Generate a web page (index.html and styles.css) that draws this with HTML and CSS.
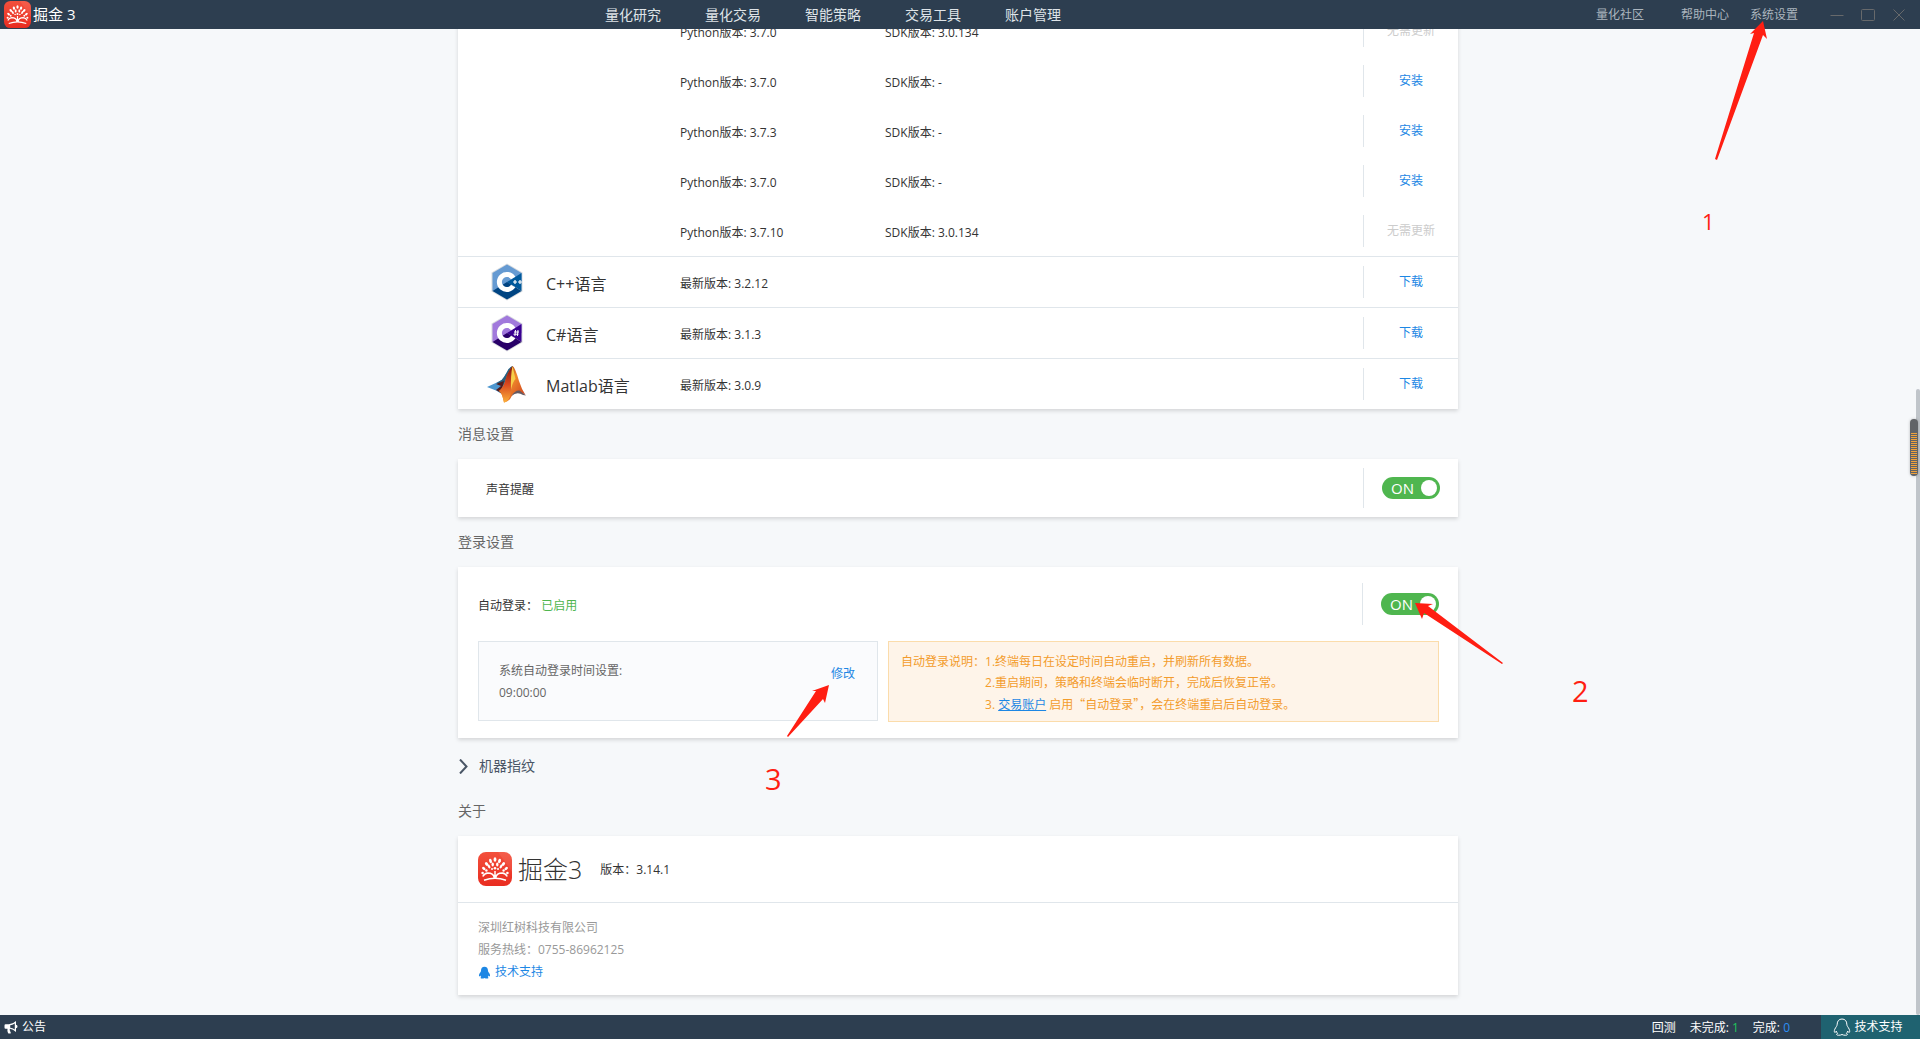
FILE: index.html
```html
<!DOCTYPE html>
<html lang="zh-CN">
<head>
<meta charset="utf-8">
<title>掘金3 - 系统设置</title>
<link rel="stylesheet" href="styles.css">
</head>
<body>
<svg class="defs" aria-hidden="true">
  <defs>
    <linearGradient id="red" x1="0" y1="0" x2="0" y2="1"><stop offset="0" stop-color="#f3503c"/><stop offset="1" stop-color="#e92c20"/></linearGradient>
    <linearGradient id="flame" x1="0" y1="0" x2="1" y2="1"><stop offset="0" stop-color="#8d1d12"/><stop offset=".45" stop-color="#f08a2c"/><stop offset="1" stop-color="#c8321a"/></linearGradient>
    <linearGradient id="flame2" x1="0" y1="0" x2="0" y2="1"><stop offset="0" stop-color="#7c1510"/><stop offset=".5" stop-color="#d9481f"/><stop offset="1" stop-color="#fbb03a"/></linearGradient>
    <symbol id="tree" viewBox="0 0 34 34">
      <rect width="34" height="34" rx="8" fill="url(#red)"/>
      <path d="M20 0h6a8 8 0 0 1 8 8v12z" fill="#fff" opacity=".08"/>
      <g fill="#fff">
        <ellipse cx="17" cy="7.500" rx="1.400" ry="2.300"/><ellipse cx="12.500" cy="9" rx="1.400" ry="2.200" transform="rotate(-15 12.500 9)"/><ellipse cx="21.500" cy="9" rx="1.400" ry="2.200" transform="rotate(15 21.500 9)"/>
        <ellipse cx="8.600" cy="12" rx="1.400" ry="2.100" transform="rotate(-40 8.600 12)"/><ellipse cx="25.400" cy="12" rx="1.400" ry="2.100" transform="rotate(40 25.400 12)"/>
        <ellipse cx="14.700" cy="12.500" rx="1.200" ry="2"/><ellipse cx="19.300" cy="12.500" rx="1.200" ry="2"/>
        <ellipse cx="11" cy="14.500" rx="1.200" ry="2" transform="rotate(-30 11 14.500)"/><ellipse cx="23" cy="14.500" rx="1.200" ry="2" transform="rotate(30 23 14.500)"/>
        <ellipse cx="5.800" cy="16.500" rx="1.300" ry="2" transform="rotate(-50 5.800 16.500)"/><ellipse cx="28.200" cy="16.500" rx="1.300" ry="2" transform="rotate(50 28.200 16.500)"/>
        <circle cx="17" cy="16.300" r="1.300"/><circle cx="14" cy="17" r="1"/><circle cx="20" cy="17" r="1"/><circle cx="8.400" cy="18.500" r="1.200"/><circle cx="25.600" cy="18.500" r="1.200"/><circle cx="4.600" cy="21" r="1.300"/><circle cx="29.400" cy="21" r="1.300"/>
      </g>
      <path d="M17 19v6M16.300 25.500q-1-4.500-6.500-4.500-3.500.3-5 3.500M17.700 25.500q1-4.500 6.500-4.500 3.500.3 5 3.500M6 28.300q11-4 22 0" fill="none" stroke="#fff" stroke-width="1.500"/>
    </symbol>
    <symbol id="hex-shape" viewBox="0 0 32 38">
      <path d="M16 0.500 31.500 9.500v19L16 37.500.5 28.500v-19z" fill="#d9dcdf"/>
    </symbol>
    <symbol id="bell-qq" viewBox="0 0 18 18">
      <path d="M9 1C5.800 1 4.200 3.300 4.200 6.200 4.200 8 2.800 9 1.800 11.200c-.8 1.800-.5 3.300.1 3.300.6 0 1.100-.9 1.500-1.300.2.900.6 1.600 1.200 2.200-.7.3-1.100.7-1 1.100.2 1 3.600 1 5.400 0 1.800 1 5.200 1 5.400 0 .1-.4-.3-.8-1-1.100.6-.6 1-1.300 1.200-2.200.4.400.9 1.300 1.500 1.300.6 0 .9-1.500.1-3.300C15.200 9 13.800 8 13.800 6.200 13.800 3.300 12.200 1 9 1z"/>
    </symbol>
  </defs>
</svg>

<header class="topbar">
  <div class="brand"><svg class="brand-icon"><use href="#tree"/></svg><span>掘金 3</span></div>
  <nav class="main-nav">
    <a href="#">量化研究</a><a href="#">量化交易</a><a href="#">智能策略</a><a href="#">交易工具</a><a href="#">账户管理</a>
  </nav>
  <nav class="side-nav">
    <a class="community" href="#">量化社区</a><a href="#">帮助中心</a><a href="#">系统设置</a>
  </nav>
  <div class="window-buttons">
    <button type="button" aria-label="最小化"><svg viewBox="0 0 14 14"><path d="M.5 7.500h13"/></svg></button>
    <button type="button" aria-label="最大化"><svg viewBox="0 0 14 14"><rect x=".5" y="1.500" width="13" height="11" rx="1"/></svg></button>
    <button type="button" aria-label="关闭"><svg viewBox="0 0 14 14"><path d="m1.500 1.500 11 11m0-11-11 11"/></svg></button>
  </div>
</header>

<main class="viewport">
  <div class="page">
    <table class="card sdk">
      <colgroup><col class="c-icon"><col class="c-name"><col class="c-version"><col><col class="c-action"></colgroup>
      <tbody>
        <tr><td></td><td></td><td>Python版本: 3.7.0</td><td>SDK版本: 3.0.134</td><td><div class="action"><button type="button" disabled>无需更新</button></div></td></tr>
        <tr><td></td><td></td><td>Python版本: 3.7.0</td><td>SDK版本: -</td><td><div class="action"><button type="button">安装</button></div></td></tr>
        <tr><td></td><td></td><td>Python版本: 3.7.3</td><td>SDK版本: -</td><td><div class="action"><button type="button">安装</button></div></td></tr>
        <tr><td></td><td></td><td>Python版本: 3.7.0</td><td>SDK版本: -</td><td><div class="action"><button type="button">安装</button></div></td></tr>
        <tr><td></td><td></td><td>Python版本: 3.7.10</td><td>SDK版本: 3.0.134</td><td><div class="action"><button type="button" disabled>无需更新</button></div></td></tr>
      </tbody>
      <tbody class="languages">
        <tr>
          <td class="icon"><svg viewBox="0 0 40 38"><g transform="translate(4)"><use href="#hex-shape" width="32" height="38"/>
            <path d="M16 1.500 30.500 10v9L1.500 28V10z" fill="#659ad2"/><path d="M30.500 10v18L16 19z" fill="#00599c"/><path d="M1.500 28 16 19l14.500 9L16 36.500z" fill="#004482"/>
            <path d="M22.200 15A7.500 7.500 0 1 0 22.200 23" fill="none" stroke="#fff" stroke-width="5"/>
            <path d="M22 19h4m-2-2v4m3-2h4m-2-2v4" stroke="#fff" stroke-width="1.200"/></g></svg></td>
          <th scope="row">C++语言</th><td>最新版本: 3.2.12</td><td></td><td><div class="action"><button type="button">下载</button></div></td>
        </tr>
        <tr>
          <td class="icon"><svg viewBox="0 0 40 38"><g transform="translate(4)"><use href="#hex-shape" width="32" height="38"/>
            <path d="M16 1.500 30.500 10v9L1.500 28V10z" fill="#a179dc"/><path d="M30.500 10v18L16 19z" fill="#390091"/><path d="M1.500 28 16 19l14.500 9L16 36.500z" fill="#280068"/>
            <path d="M22.200 15A7.500 7.500 0 1 0 22.200 23" fill="none" stroke="#fff" stroke-width="5"/>
            <path d="M24.500 16l-.6 6M27 16l-.6 6M23 18h5m-5.500 2.200h5" stroke="#fff" stroke-width="1"/></g></svg></td>
          <th scope="row">C#语言</th><td>最新版本: 3.1.3</td><td></td><td><div class="action"><button type="button">下载</button></div></td>
        </tr>
        <tr>
          <td class="icon"><svg viewBox="0 0 40 38">
            <path d="M0 22 12 16.500q3-1 5-4.500l3-5q2.500-5 5.500-6L20 21l-6 7.500-5-3z" fill="#4d97cf"/>
            <path d="M12 16.500q3-1 5-4.500l3-5q2.500-5 5.500-6L16 21l-6.500-3z" fill="#2a5f7d"/>
            <path d="m9 19 8-3-3 12-5-3 5-4z" fill="#541b1c"/>
            <path d="M25.500 1Q20 8 18.500 15q-1.500 7-6.500 11 3 1.500 5 11.500 5-.5 7.500-6Q28 26 32 27q4 1 6.500 3-4-6-6.500-14Q28 2 25.500 1z" fill="url(#flame)"/>
            <path d="M25.500 1Q20 8 18.500 15q-1.500 7-6.500 11 3 1.500 5 11.500 4-.5 6-6Q27 17 25.500 1z" fill="url(#flame2)"/>
            <path d="M25.500 1q-2 9-1.500 24 2-9 4.500-11z" fill="#f6cf4a"/>
            <path d="M24.500 31q3.500-6 8-5.500l6.500 5-3-.5q-6-4-11.500 1z" fill="#655a62"/></svg></td>
          <th scope="row">Matlab语言</th><td>最新版本: 3.0.9</td><td></td><td><div class="action"><button type="button">下载</button></div></td>
        </tr>
      </tbody>
    </table>

    <h2>消息设置</h2>
    <section class="card message">
      <label for="sound">声音提醒</label>
      <div class="switch-cell"><span class="switch"><input type="checkbox" id="sound" checked><span>ON</span></span></div>
    </section>

    <h2>登录设置</h2>
    <section class="card login">
      <div class="login-head">
        <label for="auto">自动登录： <em>已启用</em></label>
        <div class="switch-cell"><span class="switch"><input type="checkbox" id="auto" checked><span>ON</span></span></div>
      </div>
      <div class="login-body">
        <div class="time-box">
          <div>系统自动登录时间设置:<br>09:00:00</div>
          <button type="button">修改</button>
        </div>
        <div class="note">
          <span>自动登录说明：</span>
          <div>1.终端每日在设定时间自动重启，并刷新所有数据。<br>2.重启期间，策略和终端会临时断开，完成后恢复正常。<br>3. <a href="#">交易账户</a> 启用<span class="cjk">“自动登录”</span>，会在终端重启后自动登录。</div>
        </div>
      </div>
    </section>

    <button type="button" class="fingerprint"><svg viewBox="0 0 9 15"><path d="m1 .5 6.500 7-6.500 7"/></svg>机器指纹</button>

    <h2>关于</h2>
    <section class="card about">
      <div class="product"><svg class="product-icon"><use href="#tree"/></svg><strong>掘金3</strong><span>版本：3.14.1</span></div>
      <div class="company">
        <p>深圳红树科技有限公司</p>
        <p>服务热线：0755-86962125</p>
        <p><a href="#"><svg class="qq"><use href="#bell-qq"/></svg>技术支持</a></p>
      </div>
    </section>
  </div>
  <div class="scroll-track"><div class="scroll-thumb"></div></div>
</main>

<footer class="statusbar">
  <a class="notice" href="#"><svg viewBox="0 0 14 13"><path fill-rule="evenodd" d="M12 0v3.800q1.500.2 1.500 1.700T12 7.200V11Q9 8 6 7.800q-1 1.200.3 2.200-.5 1 .8 2-1.500 1-3 .2Q3 10 3.500 7.800H1.500Q.5 7.800.5 6.500v-2Q.5 3.300 1.500 3.300H5Q9 3 12 0zM10.800 2.500Q8.500 4 6.200 4.300v2.500q2.300.2 4.600 1.800z"/></svg>公告</a>
  <div class="jobs"><span>回测</span><span>未完成: <b class="pending">1</b></span><span>完成: <b class="done">0</b></span></div>
  <button type="button" class="support"><svg><use href="#bell-qq"/></svg>技术支持</button>
</footer>

<div class="meter"><div class="meter-level"></div></div>

<div class="annotations">
  <svg class="arrow arrow-1" viewBox="0 0 52 142"><path d="M49 1 36 14l4-1L1 139l2 1L49 15l4 4z"/></svg>
  <svg class="arrow arrow-2" viewBox="0 0 90 62"><path d="m1 1 18 1-5 2 75 57-1 1L10 11 8 17z"/></svg>
  <svg class="arrow arrow-3" viewBox="0 0 44 54"><path d="M43 1 26 7h4L1 52l1 1 35-38 2 4z"/></svg>
  <span class="mark mark-1">1</span><span class="mark mark-2">2</span><span class="mark mark-3">3</span>
</div>
</body>
</html>
```

FILE: styles.css
```css
* { box-sizing: border-box; }

body {
  position: relative;
  display: flex;
  flex-direction: column;
  height: 100vh;
  margin: 0;
  overflow: hidden;
  background: #f6f8fa;
  color: #333;
  font: 12px/18px "Open Sans", "Noto Sans CJK SC", sans-serif;
}

a { color: inherit; text-decoration: none; }
button { padding: 0; border: 0; background: none; color: #1d87e4; font: inherit; }
p { margin: 0; }
svg { display: block; flex: none; }
.defs { position: absolute; width: 0; height: 0; }

/* Title bar */
.topbar { display: flex; flex: none; align-items: center; height: 29px; background: #2d3e50; }
.brand { display: flex; flex: 0 1 583px; align-items: center; gap: 2px; padding-left: 4px; color: #fff; font-size: 15px; }
.brand-icon { width: 27px; height: 27px; }
.brand span { padding-bottom: 2px; }
.main-nav { display: flex; color: #dfe4e8; font-size: 14px; }
.main-nav a { padding: 0 22px; }
.side-nav { display: flex; gap: 21px; margin-left: auto; color: #abb5be; }
.side-nav .community { margin-right: 16px; }
.window-buttons { display: flex; gap: 17px; padding: 0 14px 0 32px; }
.window-buttons svg { width: 14px; height: 14px; fill: none; stroke: #67696b; }

/* Scrolling area, resting at the end of the page */
.viewport { display: flex; flex: 1; align-items: flex-end; min-height: 0; overflow: hidden; }
.page { width: 1000px; margin: 0 auto; padding-bottom: 20px; }
.scroll-track { display: flex; align-items: flex-end; width: 4px; height: 100%; }
.scroll-thumb { width: 4px; height: 63.5%; border-radius: 2px; background: #c0c5ca; }

.card { background: #fff; box-shadow: 0 2px 4px rgba(0, 0, 0, .14); }
h2 { margin: 0; color: #666; font-size: 14px; font-weight: 400; line-height: 50px; }

/* SDK versions */
.sdk { width: 100%; border-collapse: collapse; table-layout: fixed; }
.sdk td, .sdk th { height: 50px; padding: 4px 0 0; font-weight: 400; text-align: left; }
.sdk .c-icon { width: 88px; }
.sdk .c-name { width: 134px; }
.sdk .c-version { width: 205px; }
.sdk .c-action { width: 95px; }
.sdk td:last-child, .sdk .icon { padding: 0; }
.sdk th { font-size: 16px; }
.languages tr { height: 51px; border-top: 1px solid #e0e6eb; }
.languages svg { width: 40px; height: 38px; margin-left: 29px; }
.action { display: flex; align-items: center; justify-content: center; height: 32px; border-left: 1px solid #e0e6eb; }
.action button:disabled { color: #ccc; }

/* Switches */
.switch-cell { display: flex; align-items: center; justify-content: flex-end; border-left: 1px solid #e0e6eb; }
.switch { position: relative; display: flex; width: 58px; height: 22px; padding-left: 9px; border-radius: 11px; background: #4fb64f; color: #fff; font-size: 15px; line-height: 22px; }
.switch::after { position: absolute; top: 3px; right: 3px; width: 16px; height: 16px; border-radius: 50%; background: #fff; content: ""; }
.switch input { position: absolute; inset: 0; width: 100%; height: 100%; margin: 0; opacity: 0; }

.message { display: flex; align-items: center; justify-content: space-between; height: 58px; padding: 0 18px 0 28px; }
.message label, .login-head label { padding-top: 3px; }
.message .switch-cell { width: 77px; height: 40px; }

.login { padding: 16px 19px 16px 20px; }
.login-head { display: flex; align-items: center; justify-content: space-between; margin-bottom: 16px; }
.login-head em { color: #4fb64f; font-style: normal; }
.login-head .switch-cell { width: 77px; height: 42px; }
.login-body { display: grid; grid-template-columns: 400fr 551fr; gap: 10px; }
.time-box { display: flex; align-items: center; justify-content: space-between; height: 80px; padding: 2px 22px 0 20px; border: 1px solid #e0e6eb; background: #fafbfd; color: #666; line-height: 22px; }
.time-box button { padding-bottom: 16px; }
.note { display: flex; padding: 9px 12px 6px; border: 1px solid #fbdcab; background: #fef4e9; color: #f39c2c; line-height: 21px; }
.note a { color: #1d87e4; text-decoration: underline; }
.cjk { font-family: "Noto Sans CJK SC", sans-serif; }

.fingerprint { display: flex; align-items: center; gap: 11px; height: 48px; padding: 8px 0 0 1px; color: #4a5666; font-size: 14px; }
.fingerprint svg { width: 9px; height: 15px; fill: none; stroke: #4a5666; stroke-width: 2; }

/* About */
.product { display: flex; align-items: center; height: 67px; padding: 0 20px; border-bottom: 1px solid #e0e6eb; }
.product-icon { width: 34px; height: 34px; margin-right: 6px; }
.product strong { margin-right: 18px; font-size: 25px; font-weight: 300; line-height: 34px; }
.product span { padding-top: 2px; }
.company { padding: 14px 20px 12px; color: #999; line-height: 22px; }
.company a { display: flex; align-items: center; gap: 4px; color: #1d87e4; }
.qq { width: 13px; height: 13px; fill: #1d87e4; }

/* Status bar */
.statusbar { display: flex; flex: none; height: 24px; background: #2d3e50; color: #fff; line-height: 26px; }
.notice { display: flex; align-items: center; gap: 4px; padding-left: 4px; }
.notice svg { width: 14px; height: 13px; fill: #fff; }
.jobs { display: flex; gap: 14px; margin-left: auto; padding-right: 31px; }
.jobs b { font-weight: 400; }
.pending { color: #1fc75c; }
.done { color: #2b8ff5; }
.support { display: flex; align-items: center; justify-content: center; gap: 3px; width: 99px; padding-right: 5px; background: #1f6270; color: #fff; }
.support svg { width: 18px; height: 18px; fill: none; stroke: #fff; }

/* Floating level meter */
.meter { position: absolute; top: 419px; right: 2px; display: flex; align-items: flex-end; width: 8px; height: 57px; padding: 2px 1px; border-radius: 4px; background: #606367; box-shadow: 0 0 3px rgba(0, 0, 0, .25); }
.meter-level { width: 6px; height: 41px; background: repeating-linear-gradient(#f0a23c 0 1px, #606367 1px 2px); }

/* Step arrows laid over the page */
.annotations { position: absolute; inset: 0; pointer-events: none; color: #ff1e12; }
.arrow { position: absolute; overflow: visible; fill: #ff1e12; }
.arrow-1 { top: 20px; left: 1714px; width: 52px; height: 142px; }
.arrow-2 { top: 602px; left: 1414px; width: 90px; height: 62px; }
.arrow-3 { top: 684px; left: 786px; width: 44px; height: 54px; }
.mark { position: absolute; font-size: 29px; line-height: 32px; }
.mark-1 { top: 205px; left: 1702px; font-size: 22px; }
.mark-2 { top: 675px; left: 1572px; }
.mark-3 { top: 763px; left: 765px; }
```
